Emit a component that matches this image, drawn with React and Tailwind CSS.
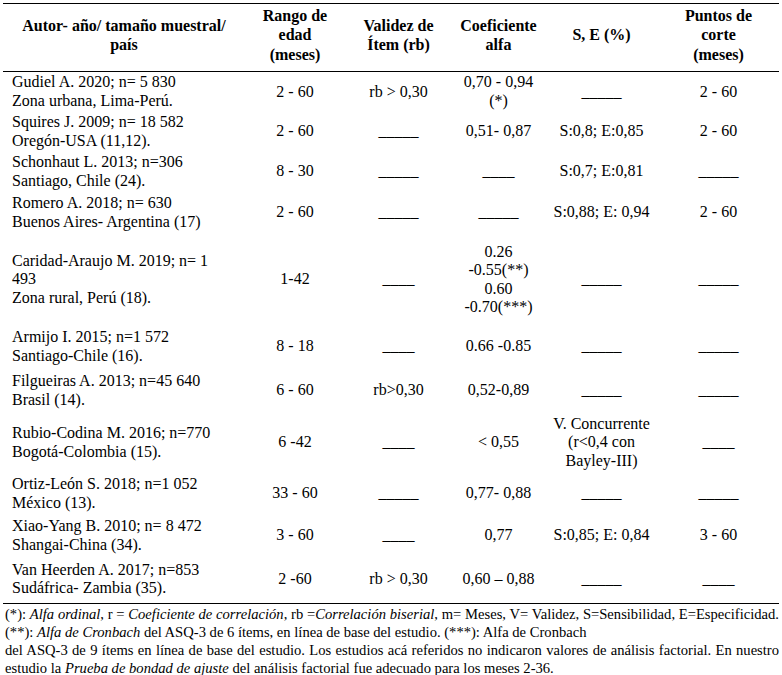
import React from "react";

const D5 = "_____";
const D4 = "____";

const rows = [
  { h: "h-[40px]", a: ["Gudiel A. 2020; n= 5 830", "Zona urbana, Lima-Perú."], r: "2 - 60", v: "rb > 0,30", c: ["0,70 - 0,94", "(*)"], s: D5, p: "2 - 60" },
  { h: "h-[40px]", a: ["Squires J. 2009; n= 18 582", "Oregón-USA (11,12)."], r: "2 - 60", v: D5, c: ["0,51- 0,87"], s: "S:0,8; E:0,85", p: "2 - 60" },
  { h: "h-[40px]", a: ["Schonhaut L. 2013; n=306", "Santiago, Chile (24)."], r: "8 - 30", v: D5, c: [D4], s: "S:0,7; E:0,81", p: D5 },
  { h: "h-[42px]", a: ["Romero A. 2018; n= 630", "Buenos Aires- Argentina (17)"], r: "2 - 60", v: D5, c: [D5], s: "S:0,88; E: 0,94", p: "2 - 60" },
  { h: "h-[92px]", a: ["Caridad-Araujo M. 2019; n= 1", "493", "Zona rural, Perú (18)."], r: "1-42", v: D4, c: ["0.26", "-0.55(**)", "0.60", "-0.70(***)"], s: D5, p: D5 },
  { h: "h-[42px]", a: ["Armijo I. 2015; n=1 572", "Santiago-Chile (16)."], r: "8 - 18", v: D4, c: ["0.66 -0.85"], s: D5, p: D5 },
  { h: "h-[46px]", a: ["Filgueiras A. 2013; n=45 640", "Brasil (14)."], r: "6 - 60", v: "rb>0,30", c: ["0,52-0,89"], s: D5, p: D5 },
  { h: "h-[58px]", a: ["Rubio-Codina M. 2016; n=770", "Bogotá-Colombia (15)."], r: "6 -42", v: D4, c: ["< 0,55"], s: ["V. Concurrente", "(r<0,4 con", "Bayley-III)"], p: D4 },
  { h: "h-[44px]", a: ["Ortiz-León S. 2018; n=1 052", "México (13)."], r: "33 - 60", v: D5, c: ["0,77- 0,88"], s: D5, p: D5 },
  { h: "h-[40px]", a: ["Xiao-Yang B. 2010; n= 8 472", "Shangai-China (34)."], r: "3 - 60", v: D4, c: ["0,77"], s: "S:0,85; E: 0,84", p: "3 - 60" },
  { h: "h-[48px]", a: ["Van Heerden A. 2017; n=853", "Sudáfrica- Zambia (35)."], r: "2 -60", v: "rb > 0,30", c: ["0,60 – 0,88"], s: D5, p: D4 },
];

function Lines({ items }) {
  const list = Array.isArray(items) ? items : [items];
  return list.map((t, i) => (
    <div key={i} className="whitespace-nowrap">
      {t}
    </div>
  ));
}

export default function App() {
  return (
    <div className="w-[782px] h-[675px] overflow-hidden bg-white text-black font-['Liberation_Serif',serif] text-[16px] leading-[18.4px] pt-[3px] px-[3px]">
      <table className="w-[776px] border-collapse table-fixed">
        <colgroup>
          <col className="w-[242px]" />
          <col className="w-[100px]" />
          <col className="w-[107px]" />
          <col className="w-[93px]" />
          <col className="w-[113px]" />
          <col className="w-[121px]" />
        </colgroup>
        <thead>
          <tr className="h-[68px] border-t border-b border-black font-bold text-center align-middle leading-[19.5px]">
            <th className="pb-[5px]">
              Autor- año/ tamaño muestral/
              <br />
              país
            </th>
            <th className="pb-[5px]">
              Rango de
              <br />
              edad
              <br />
              (meses)
            </th>
            <th className="pb-[5px]">
              Validez de
              <br />
              Ítem (rb)
            </th>
            <th className="pb-[5px]">
              Coeficiente
              <br />
              alfa
            </th>
            <th className="pb-[5px]">S, E (%)</th>
            <th className="pb-[5px]">
              Puntos de
              <br />
              corte
              <br />
              (meses)
            </th>
          </tr>
        </thead>
        <tbody>
          {rows.map((row, i) => (
            <tr key={i} className={`${row.h} align-middle ${i === rows.length - 1 ? "border-b border-black" : ""}`}>
              <td className="pl-[9px] text-left">
                <Lines items={row.a} />
              </td>
              <td className="text-center">
                <Lines items={row.r} />
              </td>
              <td className="text-center">
                <Lines items={row.v} />
              </td>
              <td className="text-center">
                <Lines items={row.c} />
              </td>
              <td className="text-center">
                <Lines items={row.s} />
              </td>
              <td className="text-center">
                <Lines items={row.p} />
              </td>
            </tr>
          ))}
        </tbody>
      </table>
      <div className="pt-[1px] pl-[2px] w-[776px] text-[14.6px] leading-[18px]">
        <p className="text-justify [text-align-last:justify]">
          (*): <i>Alfa ordinal</i>, r = <i>Coeficiente de correlación</i>, rb =<i>Correlación biserial</i>, m= Meses, V= Validez, S=Sensibilidad, E=Especificidad.
        </p>
        <p className="whitespace-nowrap">
          (**): <i>Alfa de Cronbach</i> del ASQ-3 de 6 ítems, en línea de base del estudio. (***): Alfa de Cronbach
        </p>
        <p className="text-justify [text-align-last:justify]">
          del ASQ-3 de 9 ítems en línea de base del estudio. Los estudios acá referidos no indicaron valores de análisis factorial. En nuestro
        </p>
        <p className="whitespace-nowrap">
          estudio la <i>Prueba de bondad de ajuste</i> del análisis factorial fue adecuado para los meses 2-36.
        </p>
      </div>
    </div>
  );
}
